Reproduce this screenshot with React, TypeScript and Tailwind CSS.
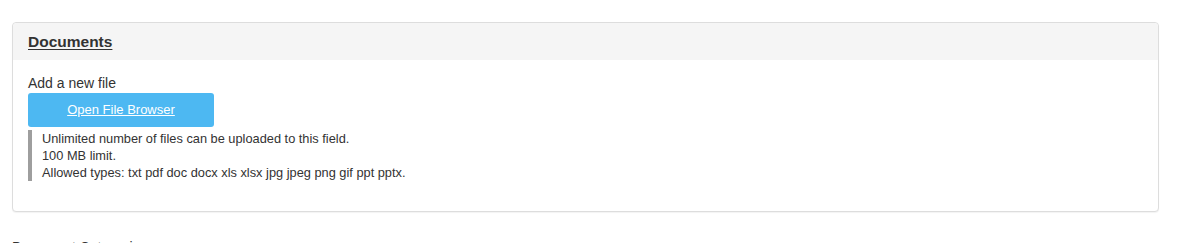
import React from "react";

const allowed = "txt pdf doc docx xls xlsx jpg jpeg png gif ppt pptx";

export default function App() {
  return (
    <div className="min-h-screen bg-white pl-3 pt-[22px] text-[#333] font-['Liberation_Sans',Arial,sans-serif]">
      {/* Documents panel */}
      <div className="w-[1147px] rounded border border-[#dddddd] bg-white shadow-[0_1px_1px_rgba(0,0,0,0.05)]">
        <div className="flex h-[37px] items-center rounded-t bg-[#f5f5f5] px-[15px]">
          <h3 className="text-[15.5px] font-bold leading-none underline underline-offset-2">
            Documents
          </h3>
        </div>
        <div className="px-[15px] pt-[14px] pb-[30px]">
          <label className="block text-[14px] leading-[19px]">Add a new file</label>
          <button
            type="button"
            className="flex h-[34px] w-[186px] items-center justify-center rounded-[3px] bg-[#4db8f2] text-[13px] text-white underline underline-offset-1"
          >
            Open File Browser
          </button>
          <div className="mt-[3px] border-l-4 border-[#9e9e9e] pl-[10px] text-[12.8px] leading-[17px]">
            <div>Unlimited number of files can be uploaded to this field.</div>
            <div>100 MB limit.</div>
            <div>Allowed types: {allowed}.</div>
          </div>
        </div>
      </div>

      <div className="mt-[25px] text-[14px] leading-5">Document Categories</div>
    </div>
  );
}
